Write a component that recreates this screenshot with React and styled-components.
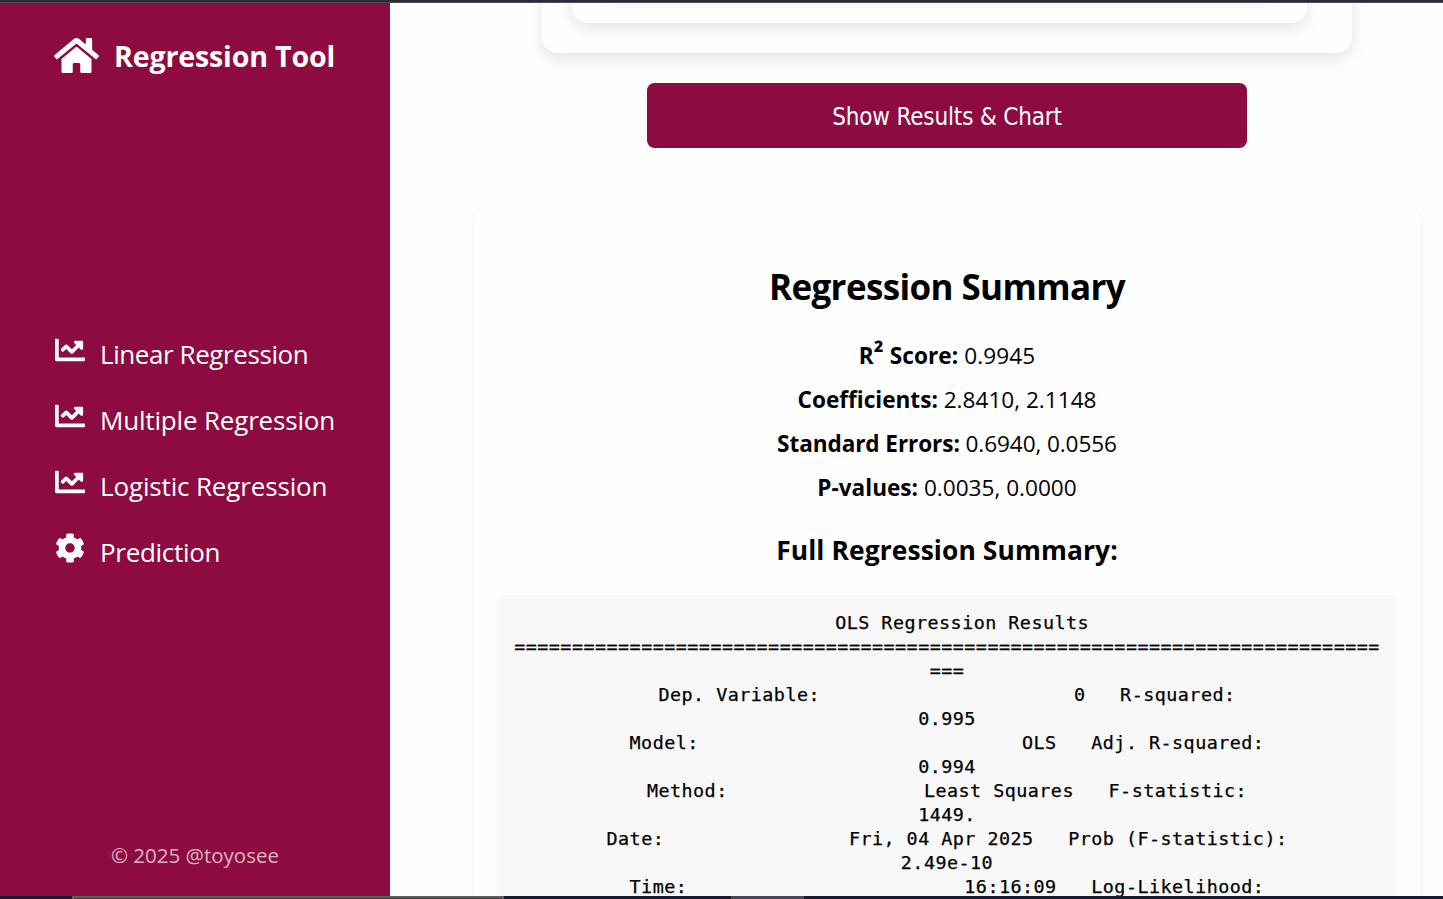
import React from 'react';
import styled, { createGlobalStyle } from 'styled-components';
import { FaHome, FaChartLine, FaCog } from 'react-icons/fa';

const wine = '#8d0b41';

const GlobalStyle = createGlobalStyle`
  * { box-sizing: border-box; }
  body {
    margin: 0;
    overflow: hidden;
    background: #fefefe;
    color: #000;
    font-family: 'Open Sans', 'Noto Sans', sans-serif;
  }
`;

const Screen = styled.div`
  display: flex;
  flex-direction: column;
  width: 1443px;
  height: 899px;
  overflow: hidden;
`;

const TopEdge = styled.div`
  flex: none;
  height: 3px;
  background: #2c2a33;
  border-bottom: 1px solid #4d4a58;
`;

const BottomEdge = styled.div`
  display: flex;
  flex: none;
  height: 3px;
  padding-left: 72px;
  background: #1a1b2e;
`;

const ActiveSegment = styled.div`
  width: 432px;
  background: #3a3a3a;
  border: 2px solid #5c5c5c;
  border-bottom: 0;
`;

const Segment = styled.div`
  width: 73px;
  margin-left: 227px;
  background: #484756;
`;

const Page = styled.div`
  display: flex;
  flex: 1;
  min-height: 0;
`;

const Sidebar = styled.aside`
  display: flex;
  flex-direction: column;
  justify-content: space-between;
  flex: none;
  width: 390px;
  padding: 30px 54px 24px;
  background: ${wine};
  color: #fff;
`;

const Brand = styled.div`
  display: flex;
  align-items: center;
  gap: 15px;
  height: 45px;
  font-size: 45px;
  svg { flex: none; }
`;

const BrandName = styled.span`
  font-size: 28.6px;
  font-weight: 700;
  letter-spacing: -0.16px;
  white-space: nowrap;
`;

const Nav = styled.nav`
  display: flex;
  flex-direction: column;
  gap: 30px;
  margin-bottom: 13px;
`;

const NavItem = styled.a`
  display: flex;
  align-items: flex-start;
  gap: 15px;
  height: 36px;
  padding-left: 1px;
  font-size: 26px;
  line-height: 38px;
  letter-spacing: ${(p) => p.$track || 0}px;
  white-space: nowrap;
  svg { flex: none; width: 30px; height: 30px; }
`;

const Footer = styled.footer`
  font-size: 20.5px;
  line-height: 34px;
  text-align: center;
  color: rgba(255, 255, 255, 0.7);
`;

const Main = styled.main`
  display: flex;
  flex-direction: column;
  align-items: center;
  flex: 1;
  min-width: 0;
  padding-left: 61px;
  overflow: hidden;
`;

const Card = styled.div`
  width: ${(p) => p.$width || '100%'};
  height: 100%;
  padding: 0 30px 30px;
  border-radius: 15px;
  background: #fefefe;
  box-shadow: 0 6px 15px rgba(0, 0, 0, 0.1);
`;

const FormArea = styled.div`
  flex: none;
  width: 810px;
  height: 200px;
  margin-top: -150px;
`;

const ResultsButton = styled.button`
  flex: none;
  width: 600px;
  height: 65px;
  margin: 30px 0 60px;
  padding: 3px 0 0;
  border: 0;
  border-radius: 7.5px;
  background: ${wine};
  color: #fff;
  font-family: 'DejaVu Sans Condensed', 'DejaVu Sans', sans-serif;
  font-stretch: condensed;
  font-size: 24px;
  letter-spacing: -0.16px;
`;

const Results = styled.section`
  flex: none;
  width: 946px;
  padding: 50px 23px 30px;
  border-radius: 12px;
  background: #fefefe;
  box-shadow: 0 3px 7.5px rgba(0, 0, 0, 0.06);
  text-align: center;
`;

const Title = styled.h2`
  margin: 0 0 18px;
  font-size: 35px;
  line-height: 58px;
  letter-spacing: -0.62px;
`;

const Stat = styled.p`
  margin: 0;
  font-size: 22.6px;
  line-height: 44px;
  letter-spacing: ${(p) => p.$track || 0}px;
`;

const Power = styled.span`
  font-size: 1.15em;
  line-height: 0;
  vertical-align: 1px;
`;

const Subtitle = styled.h3`
  margin: 20px 0 24px;
  font-size: 26.4px;
  line-height: 41px;
  letter-spacing: 0.1px;
`;

const Report = styled.pre`
  height: 400px;
  margin: 0;
  padding: 16px 15px 15px;
  border-radius: 7.5px;
  background: #f8f8f8;
  font-family: 'DejaVu Sans Mono', monospace;
  font-size: 18.4px;
  line-height: 24px;
  letter-spacing: 0.47px;
  -webkit-text-stroke: 0.25px #000;
  white-space: pre-wrap;
  overflow-wrap: anywhere;
`;

const navItems = [
  { label: 'Linear Regression', Icon: FaChartLine, track: -0.42 },
  { label: 'Multiple Regression', Icon: FaChartLine, track: -0.18 },
  { label: 'Logistic Regression', Icon: FaChartLine, track: -0.15 },
  { label: 'Prediction', Icon: FaCog, track: -0.3 },
];

const stats = [
  { label: <>R<Power>²</Power> Score:</>, value: '0.9945', track: 0.08 },
  { label: 'Coefficients:', value: '2.8410, 2.1148' },
  { label: 'Standard Errors:', value: '0.6940, 0.0556', track: -0.1 },
  { label: 'P-values:', value: '0.0035, 0.0000' },
];

const reportRow = (name, value, stat, result) =>
  name + value.padStart(37 - name.length) + '   ' + stat + result.padStart(38 - stat.length);

const report = [
  ' '.repeat(28) + 'OLS Regression Results' + ' '.repeat(28),
  '='.repeat(78),
  reportRow('Dep. Variable:', '0', 'R-squared:', '0.995'),
  reportRow('Model:', 'OLS', 'Adj. R-squared:', '0.994'),
  reportRow('Method:', 'Least Squares', 'F-statistic:', '1449.'),
  reportRow('Date:', 'Fri, 04 Apr 2025', 'Prob (F-statistic):', '2.49e-10'),
  'Time:' + '16:16:09'.padStart(32) + '   Log-Likelihood:',
].join('\n');

export default function App() {
  return (
    <>
      <GlobalStyle />
      <Screen>
        <TopEdge />
        <Page>
          <Sidebar>
            <Brand>
              <FaHome />
              <BrandName>Regression Tool</BrandName>
            </Brand>
            <Nav>
              {navItems.map(({ label, Icon, track }) => (
                <NavItem key={label} $track={track}>
                  <Icon />
                  {label}
                </NavItem>
              ))}
            </Nav>
            <Footer>© 2025 @toyosee</Footer>
          </Sidebar>
          <Main>
            <FormArea>
              <Card>
                <Card $width="735px">
                  <Card />
                </Card>
              </Card>
            </FormArea>
            <ResultsButton>Show Results &amp; Chart</ResultsButton>
            <Results>
              <Title>Regression Summary</Title>
              {stats.map(({ label, value, track }) => (
                <Stat key={value} $track={track}>
                  <strong>{label}</strong> {value}
                </Stat>
              ))}
              <Subtitle>Full Regression Summary:</Subtitle>
              <Report>{report}</Report>
            </Results>
          </Main>
        </Page>
        <BottomEdge>
          <ActiveSegment />
          <Segment />
        </BottomEdge>
      </Screen>
    </>
  );
}
